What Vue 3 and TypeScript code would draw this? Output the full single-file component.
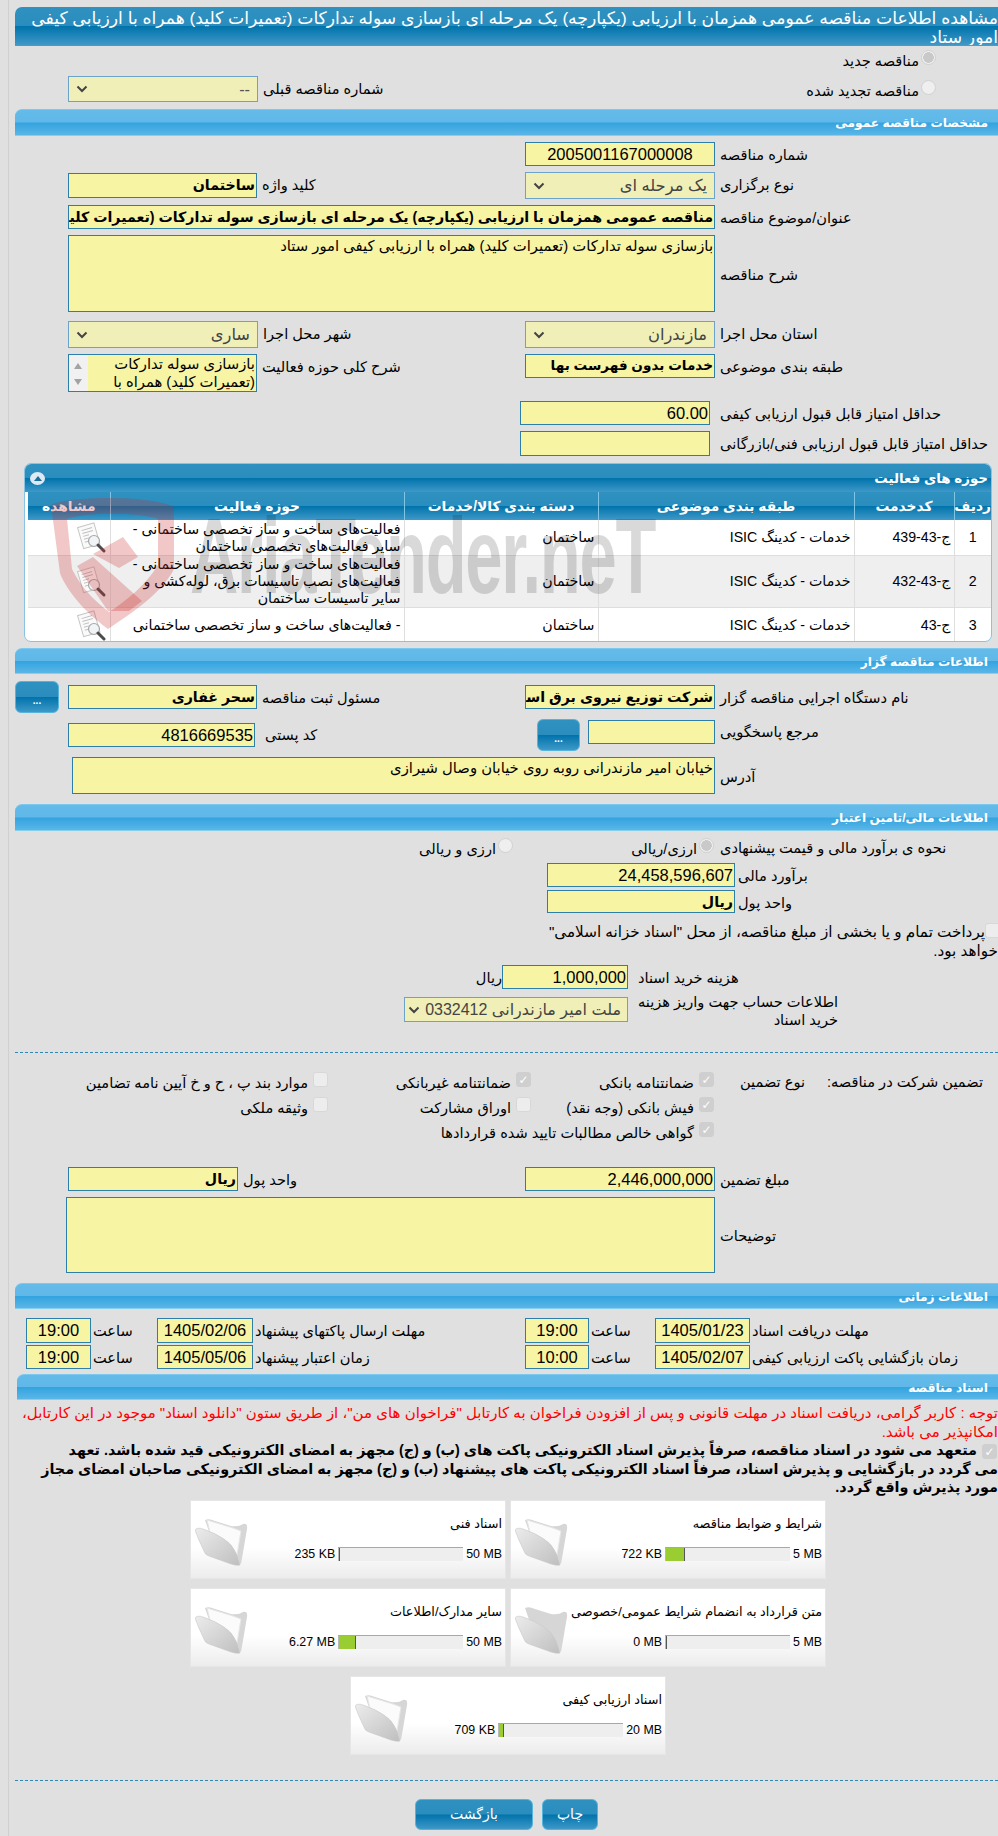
<script setup lang="ts">
interface ActivityRow { no: string; code: string; kind: string; cat: string; area: string; cls: string }
interface DocCard { title: string; max: string; used: string; pct: number; dim?: boolean }

const headers = ['ردیف', 'کدخدمت', 'طبقه بندی موضوعی', 'دسته بندی کالا/خدمات', 'حوزه فعالیت', 'مشاهده']

const rows: ActivityRow[] = [
  { no: '1', code: 'ج-43-439', kind: 'خدمات - کدینگ ISIC', cat: 'ساختمان', area: 'فعالیت‌های ساخت و ساز تخصصی ساختمانی - سایر فعالیت‌های تخصصی ساختمان', cls: 'r1' },
  { no: '2', code: 'ج-43-432', kind: 'خدمات - کدینگ ISIC', cat: 'ساختمان', area: 'فعالیت‌های ساخت و ساز تخصصی ساختمانی - فعالیت‌های نصب تاسیسات برق، لوله‌کشی و سایر تاسیسات ساختمان', cls: 'r2' },
  { no: '3', code: 'ج-43', kind: 'خدمات - کدینگ ISIC', cat: 'ساختمان', area: '- فعالیت‌های ساخت و ساز تخصصی ساختمانی', cls: 'r3' },
]

const cards: DocCard[] = [
  { title: 'شرایط و ضوابط مناقصه', max: '5 MB', used: '722 KB', pct: 16 },
  { title: 'اسناد فنی', max: '50 MB', used: '235 KB', pct: 0.5 },
  { title: 'متن قرارداد به انضمام شرایط عمومی/خصوصی', max: '5 MB', used: '0 MB', pct: 0, dim: true },
  { title: 'سایر مدارک/اطلاعات', max: '50 MB', used: '6.27 MB', pct: 14 },
  { title: 'اسناد ارزیابی کیفی', max: '20 MB', used: '709 KB', pct: 5 },
]

const barWidth = (pct: number): string => `${pct}%`
</script>

<template>
  <div class="page">
    <div class="wm">
      <svg class="wm-logo" viewBox="0 0 130 135" width="130" height="135">
        <path class="wm-red" fill-rule="evenodd" d="M1 8 C20 -1 100 -2 124 10 L124 72 C112 96 82 116 58 132 C30 112 14 88 10 76 Z M17 22 L22 72 C30 88 42 102 59 115 C76 104 96 88 108 68 L108 22 C90 15 35 15 17 22 Z"/>
        <path class="wm-red" d="M43 57 L73 40 L88 60 L69 71 Z"/>
        <path class="wm-red" d="M27 69 L43 60 L92 104 L79 114 L58 114 Z"/>
      </svg>
      <span class="wm-text">AriaTender.neT</span>
    </div>

    <div class="head-bar" dir="rtl">مشاهده اطلاعات مناقصه عمومی همزمان با ارزیابی (یکپارچه) یک مرحله ای بازسازی سوله تدارکات (تعمیرات کلید) همراه با ارزیابی کیفی<br />امور ستاد</div>

    <div class="row h30">
      <div class="radio-line rl1"><span class="radio on"></span><span class="lb">مناقصه جدید</span></div>
    </div>
    <div class="row h33">
      <div class="half">
        <div class="sel w190 h26 muted"><span>--</span><svg class="chev" viewBox="0 0 12 8"><path d="M1.5 1.5 6 6l4.5-4.5"/></svg></div>
        <span class="lb lg">شماره مناقصه قبلی</span>
      </div>
      <div class="radio-line rl2"><span class="radio"></span><span class="lb">مناقصه تجدید شده</span></div>
    </div>

    <div class="sec">مشخصات مناقصه عمومی</div>

    <div class="row mt6">
      <div class="half"></div>
      <div class="fld w190 centered">2005001167000008</div>
      <span class="lb lg">شماره مناقصه</span>
    </div>
    <div class="row mt6">
      <div class="half">
        <div class="fld w189 h25 mt1 b">ساختمان</div>
        <span class="lb lg">کلید واژه</span>
      </div>
      <div class="sel w190 h27"><span>یک مرحله ای</span><svg class="chev" viewBox="0 0 12 8"><path d="M1.5 1.5 6 6l4.5-4.5"/></svg></div>
      <span class="lb lg">نوع برگزاری</span>
    </div>
    <div class="row mt6 inset">
      <div class="fld w647 b">مناقصه عمومی همزمان با ارزیابی (یکپارچه) یک مرحله ای بازسازی سوله تدارکات (تعمیرات کلید) همراه با ارزیابی کیفی امور ستاد</div>
      <span class="lb lg">عنوان/موضوع مناقصه</span>
    </div>
    <div class="row mt6 inset mid">
      <div class="area w647 h77">بازسازی سوله تدارکات (تعمیرات کلید) همراه با ارزیابی کیفی امور ستاد</div>
      <span class="lb lg">شرح مناقصه</span>
    </div>
    <div class="row mt9">
      <div class="half">
        <div class="sel w190 h27"><span>ساری</span><svg class="chev" viewBox="0 0 12 8"><path d="M1.5 1.5 6 6l4.5-4.5"/></svg></div>
        <span class="lb lg">شهر محل اجرا</span>
      </div>
      <div class="sel w190 h27"><span>مازندران</span><svg class="chev" viewBox="0 0 12 8"><path d="M1.5 1.5 6 6l4.5-4.5"/></svg></div>
      <span class="lb lg">استان محل اجرا</span>
    </div>
    <div class="row mt6 h38">
      <div class="half">
        <div class="scroll-area">
          <div class="sbar"><i class="tri up"></i><i class="tri down"></i></div>
          <div class="scroll-text">بازسازی سوله تدارکات (تعمیرات کلید) همراه با ارزیابی کیفی امور ستاد</div>
        </div>
        <span class="lb lg">شرح کلی حوزه فعالیت</span>
      </div>
      <div class="fld w190 b tight">خدمات بدون فهرست بها</div>
      <span class="lb lg">طبقه بندی موضوعی</span>
    </div>
    <div class="row mt9 score">
      <div class="fld w190">60.00</div>
      <span class="lb l10">حداقل امتیاز قابل قبول ارزیابی کیفی</span>
    </div>
    <div class="row mt6 score">
      <div class="fld w190 h25"></div>
      <span class="lb l10">حداقل امتیاز قابل قبول ارزیابی فنی/بازرگانی</span>
    </div>

    <div class="panel">
      <div class="panel-head" dir="rtl">
        <span>حوزه های فعالیت</span>
        <span class="collapse"><i></i></span>
      </div>
      <table class="grid" dir="rtl">
        <colgroup>
          <col class="c1" /><col class="c2" /><col class="c3" /><col class="c4" /><col class="c5" /><col class="c6" />
        </colgroup>
        <thead>
          <tr><th v-for="h in headers" :key="h">{{ h }}</th></tr>
        </thead>
        <tbody>
          <tr v-for="r in rows" :key="r.no" :class="r.cls">
            <td class="no">{{ r.no }}</td>
            <td class="start">{{ r.code }}</td>
            <td class="start kind">{{ r.kind }}</td>
            <td class="start">{{ r.cat }}</td>
            <td class="start">{{ r.area }}</td>
            <td class="icon-cell">
              <svg class="doc-icon" viewBox="0 0 32 32" width="32" height="32">
                <g transform="rotate(-16 13 13)">
                  <rect x="5" y="3" width="17" height="22" fill="#fafafa" stroke="#c6c6c6"/>
                  <path d="M8 7h11M8 10h11M8 13h6M8 16h5M8 19h5" stroke="#c0c0c0" fill="none"/>
                </g>
                <circle cx="19" cy="19" r="5.5" fill="#eef2f4" fill-opacity=".85" stroke="#a8a8a8" stroke-width="1.2"/>
                <path d="M23 23l6 6" stroke="#4c4c4c" stroke-width="3" stroke-linecap="round"/>
              </svg>
            </td>
          </tr>
        </tbody>
      </table>
    </div>

    <div class="sec mt6 h26">اطلاعات مناقصه گزار</div>

    <div class="row mt7 h32">
      <div class="half flush">
        <button class="btn dots" type="button">...</button>
        <div class="fld w189 mt4 b">سحر غفاری</div>
        <span class="lb lg mt4">مسئول ثبت مناقصه</span>
      </div>
      <div class="fld w190 mt4 b">شرکت توزیع نیروی برق استان مازندران</div>
      <span class="lb lg mt4">نام دستگاه اجرایی مناقصه گزار</span>
    </div>
    <div class="row mt6 h32">
      <div class="half">
        <div class="fld w187 mt4">4816669535</div>
        <span class="lb zip">کد پستی</span>
      </div>
      <div class="pre-ref"><button class="btn dots2" type="button">...</button></div>
      <div class="fld w127 mt1"></div>
      <span class="lb lg">مرجع پاسخگویی</span>
    </div>
    <div class="row mt6 addr mid">
      <div class="area w643 h37">خیابان امیر مازندرانی روبه روی خیابان وصال شیرازی</div>
      <span class="lb lg">آدرس</span>
    </div>

    <div class="sec mt10">اطلاعات مالی/تامین اعتبار</div>

    <div class="row fin-radio">
      <div class="radio-line rf2"><span class="radio"></span><span class="lb">ارزی و ریالی</span></div>
      <div class="radio-line rf1"><span class="radio on"></span><span class="lb">ارزی/ریالی</span></div>
      <span class="lb fin-lb">نحوه ی برآورد مالی و قیمت پیشنهادی</span>
    </div>
    <div class="row money">
      <div class="fld w188">24,458,596,607</div>
      <span class="lb lt">برآورد مالی</span>
    </div>
    <div class="row money mt3">
      <div class="fld w188 h23 b">ریال</div>
      <span class="lb lt">واحد پول</span>
    </div>
    <div class="note" dir="rtl">
      <span class="chk-inline"></span>پرداخت تمام و یا بخشی از مبلغ مناقصه، از محل "اسناد خزانه اسلامی"<br />خواهد بود.
    </div>
    <div class="row fee mt5">
      <span class="lb unit">ریال</span>
      <div class="fld w126">1,000,000</div>
      <span class="lb l10">هزینه خرید اسناد</span>
    </div>
    <div class="row fee2 mt8">
      <div class="sel sel-acc">
        <span>ملت امیر مازندرانی 0332412</span><svg class="chev" viewBox="0 0 12 8"><path d="M1.5 1.5 6 6l4.5-4.5"/></svg>
      </div>
      <span class="lb two">اطلاعات حساب جهت واریز هزینه<br />خرید اسناد</span>
    </div>

    <div class="dash d1"></div>

    <div class="guar" dir="rtl">
      <span class="lb">تضمین شرکت در مناقصه:</span>
      <span class="lb">نوع تضمین</span>
      <div class="ck"><span class="box on">✓</span><span class="lb">ضمانتنامه بانکی</span></div>
      <div class="ck"><span class="box on">✓</span><span class="lb">ضمانتنامه غیربانکی</span></div>
      <div class="ck"><span class="box"></span><span class="lb">موارد بند پ ، ح و خ آیین نامه تضامین</span></div>
      <i></i><i></i>
      <div class="ck"><span class="box on">✓</span><span class="lb">فیش بانکی (وجه نقد)</span></div>
      <div class="ck"><span class="box"></span><span class="lb">اوراق مشارکت</span></div>
      <div class="ck"><span class="box"></span><span class="lb">وثیقه ملکی</span></div>
      <i></i><i></i>
      <div class="ck wide"><span class="box on">✓</span><span class="lb">گواهی خالص مطالبات تایید شده قراردادها</span></div>
    </div>

    <div class="row guar-sum">
      <div class="half">
        <div class="fld w170 b">ریال</div>
        <span class="lb lg">واحد پول</span>
      </div>
      <div class="fld w190">2,446,000,000</div>
      <span class="lb lg">مبلغ تضمین</span>
    </div>
    <div class="row mt6 wideArea mid">
      <div class="area w649 h76"></div>
      <span class="lb lg">توضیحات</span>
    </div>

    <div class="sec mt10 h26">اطلاعات زمانی</div>

    <div class="row mt9 time-row">
      <div class="half tleft">
        <div class="fld t65">19:00</div><span class="lb tlab">ساعت</span>
        <div class="fld d96">1405/02/06</div><span class="lb dlab">مهلت ارسال پاکتهای پیشنهاد</span>
      </div>
      <div class="fld t64">19:00</div><span class="lb tlab">ساعت</span>
      <div class="fld d95">1405/01/23</div><span class="lb dlab">مهلت دریافت اسناد</span>
    </div>
    <div class="row mt2 time-row t2">
      <div class="half tleft">
        <div class="fld t65">19:00</div><span class="lb tlab">ساعت</span>
        <div class="fld d96">1405/05/06</div><span class="lb dlab">زمان اعتبار پیشنهاد</span>
      </div>
      <div class="fld t64">10:00</div><span class="lb tlab">ساعت</span>
      <div class="fld d95">1405/02/07</div><span class="lb dlab">زمان بازگشایی پاکت ارزیابی کیفی</span>
    </div>

    <div class="sec doc-sec">اسناد مناقصه</div>

    <div class="warn" dir="rtl">توجه : کاربر گرامی، دریافت اسناد در مهلت قانونی و پس از افزودن فراخوان به کارتابل "فراخوان های من"، از طریق ستون "دانلود اسناد" موجود در این کارتابل،<br />امکانپذیر می باشد.</div>
    <div class="pledge" dir="rtl"><span class="box on pledge-box">✓</span> متعهد می شود در اسناد مناقصه، صرفاً پذیرش اسناد الکترونیکی پاکت های (ب) و (ج) مجهز به امضای الکترونیکی قید شده باشد. تعهد<br />می گردد در بازگشایی و پذیرش اسناد، صرفاً اسناد الکترونیکی پاکت های پیشنهاد (ب) و (ج) مجهز به امضای الکترونیکی صاحبان امضای مجاز<br />مورد پذیرش واقع گردد.</div>

    <div class="cards">
      <div v-for="c in cards" :key="c.title" class="card">
        <svg class="folder" viewBox="0 0 54 48" width="54" height="48">
          <defs>
            <linearGradient id="fg" x1="0" y1="0" x2="1" y2="1">
              <stop offset="0" stop-color="#ececec"/><stop offset="1" stop-color="#bfbfbf"/>
            </linearGradient>
          </defs>
          <path d="M10 1 Q14 -1 20 2 L36 7 Q44 8 48 5 Q53 4 52 10 L46 45 L20 30 Z" fill="#d6d6d6"/>
          <path v-if="!c.dim" d="M12 1 L38 9 L46 12 L42 36 L18 26 Z" fill="#fbfbfb" stroke="#e6e6e6"/>
          <path d="M0 11 Q2 8 8 10 Q20 14 29 20 Q37 25 41 34 L45 46 Q42 47 36 45 L14 37 Q10 36 9 32 Q4 22 0 11 Z" fill="url(#fg)" stroke="#c8c8c8" stroke-width=".6"/>
        </svg>
        <div class="card-body" dir="rtl">
          <div class="card-title">{{ c.title }}</div>
          <div class="meter">
            <span class="m-max">{{ c.max }}</span>
            <div class="track"><div class="fill" :style="{ width: barWidth(c.pct) }"></div></div>
            <span class="m-used" dir="ltr">{{ c.used }}</span>
          </div>
        </div>
      </div>
    </div>

    <div class="dash d2"></div>

    <div class="actions">
      <button class="btn act back" type="button">بازگشت</button>
      <button class="btn act print" type="button">چاپ</button>
    </div>
  </div>
</template>

<style>
html, body { margin: 0; background: #e0e0e0; }
</style>

<style scoped>
.page {
  position: relative;
  width: 990px;
  height: 1836px;
  margin-left: 8px;
  padding: 7px 0 0 6px;
  box-sizing: border-box;
  border-left: 1px solid #d0d0d0;
  background: #e0e0e0;
  overflow: hidden;
  font-family: "Liberation Sans", "DejaVu Sans", sans-serif;
  font-size: 14.6px;
  color: #000;
  direction: ltr;
}

/* watermark */
.wm { position: absolute; left: 0; top: 0; pointer-events: none; z-index: 5; }
.wm-logo { position: absolute; left: 41px; top: 497px; }
.wm-red { fill: rgba(205, 40, 40, .26); }
.wm-text {
  position: absolute;
  left: 181px;
  top: 502px;
  font: bold 108px/1 "Liberation Sans", sans-serif;
  color: rgba(0, 0, 0, .15);
  transform: scaleX(.62);
  transform-origin: left top;
  white-space: nowrap;
  letter-spacing: -2px;
}

/* bars */
.head-bar {
  width: 983px;
  height: 39px;
  box-sizing: border-box;
  padding: 2px 0 0 0;
  border-radius: 7px 0 0 0;
  border-bottom: 1px solid #4a9bcb;
  background: linear-gradient(#2f91c0 0, #2a8dbd 49%, #0073ab 51%, #3f98c8 100%);
  color: #fff;
  font-size: 17.2px;
  line-height: 18.5px;
  white-space: nowrap;
  overflow: hidden;
}
.sec {
  width: 983px;
  height: 27px;
  box-sizing: border-box;
  padding-right: 10px;
  border-radius: 7px 0 0 0;
  border-top: 1px solid #7cc8ee;
  border-bottom: 1px solid #86d0ee;
  background: linear-gradient(#64bbea 0, #5fb8e8 49%, #33a3df 51%, #5ab6e7 100%);
  color: #fff;
  font-weight: bold;
  font-size: 12.2px;
  line-height: 27px;
  direction: rtl;
  text-align: right;
}
.h26 { height: 26px; }
.doc-sec { width: 981px; height: 26px; margin: 4px 0 0 2px; }

/* rows */
.row { display: flex; align-items: flex-start; }
.half { display: flex; align-items: flex-start; width: 510px; padding-left: 53px; box-sizing: border-box; flex: none; }
.half.flush { padding-left: 0; }
.h30 { height: 30px; justify-content: flex-end; }
.h33 { height: 33px; }
.h32 { height: 32px; }
.h38 { height: 38px; }
.mt1 { margin-top: 1px; }
.mt2 { margin-top: 2px; }
.mt3 { margin-top: 3px; }
.mt4 { margin-top: 4px; }
.mt5 { margin-top: 5px; }
.mt6 { margin-top: 6px; }
.mt7 { margin-top: 7px; }
.mt8 { margin-top: 8px; }
.mt9 { margin-top: 9px; }
.mt10 { margin-top: 10px; }
.inset { padding-left: 53px; }
.mid { align-items: center; }
.score { padding-left: 505px; }
.addr { padding-left: 57px; }
.wideArea { padding-left: 51px; }
.money { padding-left: 532px; }
.fee { padding-left: 462px; }
.fee2 { padding-left: 389px; height: 25px; }

.lb { direction: rtl; white-space: nowrap; line-height: 24px; transform: translateY(1px); }
.lg { margin-left: 5px; }
.l10 { margin-left: 10px; }
.lt { margin-left: 3px; }
.two { line-height: 18px; margin-top: -5px; margin-left: 10px; }
.zip { margin: 3px 0 0 10px; }
.unit { width: 25px; text-align: left; }

/* fields */
.fld, .area, .sel, .scroll-area {
  box-sizing: border-box;
  flex: none;
  border: 1px solid #2d7fa9;
  background: #f7f4a4;
}
.fld {
  height: 24px;
  padding: 0 1px;
  direction: rtl;
  font-size: 16.5px;
  line-height: 22px;
  white-space: nowrap;
  overflow: hidden;
}
.fld.b { font-weight: bold; font-size: 14.2px; }
.fld.tight { font-size: 13.6px; }
.centered { text-align: center; }
.area {
  padding: 2px 1px;
  direction: rtl;
  font-size: 14.8px;
  line-height: 17px;
  overflow: hidden;
}
.sel {
  display: flex;
  align-items: center;
  justify-content: space-between;
  padding: 0 7px 0 7px;
  border-color: #6ba3c9;
  background: #f0efb8;
  color: #444;
  direction: rtl;
  font-size: 16.3px;
  white-space: nowrap;
}
.sel.muted { color: #555; }
.chev { width: 12px; height: 8px; flex: none; fill: none; stroke: #444; stroke-width: 2; }
.sel-acc { width: 224px; height: 25px; overflow: hidden; padding: 0 6px 0 3px; font-size: 16px; }
.sel-acc > span { direction: rtl; overflow: hidden; width: 200px; }
.w126 { width: 126px; }
.w127 { width: 127px; }
.w170 { width: 170px; }
.w187 { width: 187px; }
.w188 { width: 188px; }
.w189 { width: 189px; }
.w190 { width: 190px; }
.w643 { width: 643px; }
.w647 { width: 647px; }
.w649 { width: 649px; }
.h23 { height: 23px; }
.h25 { height: 25px; }
.h26.sel { height: 26px; }
.h27 { height: 27px; }
.h37 { height: 37px; }
.h76 { height: 76px; }
.h77 { height: 77px; }

.scroll-area {
  display: flex;
  width: 189px;
  height: 38px;
  overflow: hidden;
}
.sbar {
  position: relative;
  width: 19px;
  flex: none;
  background: #f1f1f1;
}
.tri { position: absolute; left: 5px; width: 0; height: 0; border-left: 4.5px solid transparent; border-right: 4.5px solid transparent; }
.tri.up { top: 8px; border-bottom: 6px solid #a3a3a3; }
.tri.down { top: 24px; border-top: 6px solid #a3a3a3; }
.scroll-text {
  flex: 1;
  direction: rtl;
  padding: 0 1px;
  font-size: 14.8px;
  line-height: 18px;
}

/* radios & checks */
.radio-line { display: flex; flex-direction: row-reverse; align-items: center; gap: 2px; }
.radio-line .lb { line-height: 18px; margin-top: 2px; }
.rl1 { margin: 3px 62px 0 0; }
.rl2 { margin: 3px 62px 0 auto; }
.radio {
  width: 15px;
  height: 15px;
  box-sizing: border-box;
  border: 1.5px solid #d1d1d1;
  border-radius: 50%;
  background: #efefef;
  flex: none;
  margin-top: -3px;
}
.radio.on { background: radial-gradient(#c9c9c9 0 55%, #efefef 60%); }
.box {
  display: inline-block;
  width: 15px;
  height: 15px;
  box-sizing: border-box;
  border: 1px solid #d8d8d8;
  border-radius: 3px;
  background: #ededed;
  flex: none;
  color: #fff;
  font: bold 12px/14px "DejaVu Sans", sans-serif;
  text-align: center;
  vertical-align: middle;
}
.box.on { background: #cfcfcf; border-color: #cfcfcf; }

.fin-radio { height: 32px; align-items: center; }
.rf2 { margin-left: 404px; width: 94px; justify-content: flex-start; }
.rf1 { margin-left: 91px; width: 110px; justify-content: flex-start; }
.fin-lb { margin-left: 6px; }
.fin-radio .radio { margin-top: -3px; }

.note {
  width: 470px;
  margin: 8px 0 0 513px;
  font-size: 15.2px;
  line-height: 19px;
  white-space: nowrap;
}
.chk-inline {
  display: inline-block;
  width: 13px;
  height: 15px;
  box-sizing: border-box;
  border: 1px solid #d8d8d8;
  border-right: 0;
  border-radius: 3px 0 0 3px;
  background: #ededed;
  vertical-align: -1px;
}

/* dashes */
.dash { height: 0; border-top: 1px dashed #2f87b3; width: 983px; }
.d1 { margin-top: 30px; }
.d2 { margin-top: 25px; }

/* guarantee */
.guar {
  display: grid;
  grid-template-columns: 178px 91px 183px 203px 1fr;
  grid-auto-rows: 25px;
  width: 983px;
  box-sizing: border-box;
  margin-top: 16px;
  padding-right: 15px;
  align-items: center;
}
.guar > .lb { line-height: 25px; }
.ck { display: flex; align-items: center; gap: 5px; white-space: nowrap; }
.ck .box { margin-top: -5px; }
.ck.wide { grid-column: span 3; }
.guar-sum { margin-top: 23px; }

/* time rows */
.time-row { height: 25px; }
.time-row .fld { height: 25px; text-align: center; padding: 0; }
.t2 .fld { height: 24px; }
.tleft { padding-left: 11px; }
.t65 { width: 65px; }
.t64 { width: 64px; }
.d96 { width: 96px; }
.d95 { width: 95px; }
.tlab { width: 66px; padding-left: 2px; box-sizing: border-box; text-align: left; }
.dlab { margin-left: 2px; }

/* panel */
.panel {
  position: relative;
  width: 968px;
  height: 179px;
  margin: 7px 0 0 9px;
  box-sizing: border-box;
  border: 1px solid #88c3e2;
  border-radius: 7px;
  background: #fff;
  overflow: hidden;
}
.panel-head {
  display: flex;
  justify-content: space-between;
  align-items: center;
  height: 28px;
  padding: 0 3px 0 5px;
  background: linear-gradient(#2f91c0 0, #2a8dbd 49%, #0073ab 51%, #3f98c8 100%);
  color: #fff;
  font-weight: bold;
  font-size: 13.4px;
}
.collapse {
  display: flex;
  align-items: center;
  justify-content: center;
  width: 15px;
  height: 13px;
  border-radius: 50%;
  background: #dbeaf4;
}
.collapse i { width: 0; height: 0; border-left: 4px solid transparent; border-right: 4px solid transparent; border-bottom: 5px solid #1d6d9b; }
.grid {
  table-layout: fixed;
  width: 963px;
  margin-left: 3px;
  border-collapse: collapse;
  font-size: 14.2px;
  line-height: 17px;
}
.c1 { width: 37px; }
.c2 { width: 100px; }
.c3 { width: 256px; }
.c4 { width: 194px; }
.c5 { width: 294px; }
.c6 { width: 82px; }
.grid th {
  height: 28px;
  padding: 0;
  border-left: 1px solid #7fc5e6;
  background: linear-gradient(#2f91c0 0, #2a8dbd 49%, #0073ab 51%, #3f98c8 100%);
  color: #fff;
  font-size: 13.8px;
  font-weight: bold;
  white-space: nowrap;
}
.grid th:last-child { border-left: 0; }
.grid td {
  padding: 0 3px;
  border-left: 1px solid #dedede;
  border-bottom: 1px solid #dedede;
  vertical-align: middle;
  overflow: hidden;
}
.grid td:last-child { border-left: 0; }
.grid tr.r1 td { height: 35px; }
.grid tr.r2 td { height: 51px; background: #efefef; }
.grid tr.r3 td { height: 34px; border-bottom: 0; }
.no { text-align: center; }
.start { text-align: right; white-space: normal; }
.kind { direction: rtl; }
.grid td.icon-cell { padding: 0; }
.doc-icon { display: block; margin-right: 3px; }
.r3 .doc-icon { margin-top: 2px; }

/* buttons */
.btn {
  border: 1px solid #55b4dc;
  background: linear-gradient(#2f91c0 0, #2a8dbd 49%, #0073ab 51%, #3f98c8 100%);
  color: #fff;
  font-family: inherit;
  padding: 0;
  flex: none;
}
.dots {
  width: 44px;
  height: 32px;
  margin-right: 9px;
  border-radius: 6px;
  font-size: 10px;
  line-height: 38px;
  font-weight: bold;
  box-sizing: border-box;
}
.pre-ref { display: flex; width: 63px; padding-left: 12px; height: 32px; box-sizing: border-box; flex: none; }
.dots2 {
  width: 43px;
  height: 32px;
  border-radius: 6px;
  font-size: 10px;
  font-weight: bold;
  line-height: 38px;
  box-sizing: border-box;
}

/* docs */
.warn {
  width: 983px;
  margin-top: 3px;
  color: #f00;
  font-size: 15px;
  line-height: 19px;
  box-sizing: border-box;
  white-space: nowrap;
}
.pledge {
  width: 983px;
  box-sizing: border-box;
  font-weight: bold;
  font-size: 14.4px;
  line-height: 18.5px;
  white-space: nowrap;
}
.pledge-box { margin-left: 1px; margin-right: 1px; }

.cards {
  display: flex;
  flex-wrap: wrap;
  justify-content: center;
  gap: 9px 4px;
  width: 640px;
  margin: 3px 0 0 173px;
  direction: rtl;
}
.card {
  display: flex;
  width: 316px;
  height: 79px;
  box-sizing: border-box;
  padding: 18px 3px 0 4px;
  border: 1px solid #e6e6e6;
  background: linear-gradient(#fff 0, #fff 60%, #ececec 100%);
  direction: ltr;
}
.folder { flex: none; }
.card-body { flex: 1; min-width: 0; }
.card-title {
  font-size: 12.8px;
  line-height: 16px;
  white-space: nowrap;
  margin-top: -3px;
}
.meter {
  display: flex;
  align-items: center;
  gap: 3px;
  margin-top: 15px;
  font-size: 12.4px;
  font-family: "Liberation Sans", sans-serif;
}
.m-max { white-space: nowrap; direction: ltr; }
.track {
  position: relative;
  flex: none;
  width: 125px;
  height: 14px;
  box-sizing: border-box;
  border-top: 1px solid #a8a8a8;
  background: #eee;
  direction: ltr;
}
.fill {
  height: 13px;
  min-width: 1px;
  background: #9acd32;
  border-right: 1px solid #555;
  border-left: 1px solid #b8b8b8;
  box-sizing: border-box;
}
.m-used { white-space: nowrap; }

.actions {
  display: flex;
  gap: 9px;
  margin: 18px 0 0 400px;
}
.act {
  height: 31px;
  border-radius: 6px;
  font-size: 14px;
  box-sizing: border-box;
}
.back { width: 118px; }
.print { width: 56px; }
</style>
